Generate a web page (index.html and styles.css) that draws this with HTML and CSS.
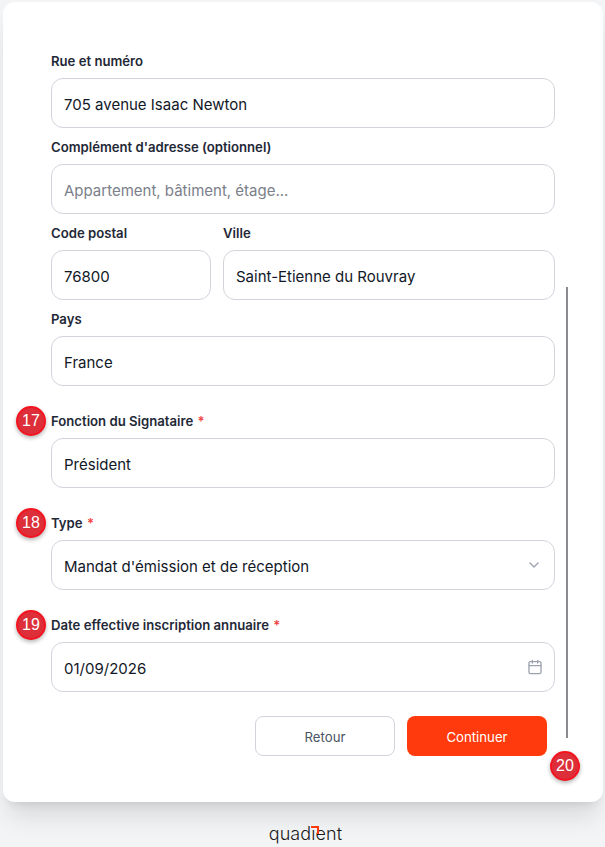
FILE: index.html
```html
<!DOCTYPE html>
<html lang="fr">
<head>
<meta charset="utf-8">
<title>Adresse</title>
<link rel="stylesheet" href="styles.css">
</head>
<body>
<main class="card">
  <form class="form">
    <div class="group">
      <div class="field">
        <label class="label">Rue et numéro</label>
        <div class="control">705 avenue Isaac Newton</div>
      </div>
      <div class="field">
        <label class="label">Complément d'adresse (optionnel)</label>
        <div class="control placeholder">Appartement, bâtiment, étage...</div>
      </div>
      <div class="row">
        <div class="field postal">
          <label class="label">Code postal</label>
          <div class="control">76800</div>
        </div>
        <div class="field city">
          <label class="label">Ville</label>
          <div class="control">Saint-Etienne du Rouvray</div>
        </div>
      </div>
      <div class="field">
        <label class="label">Pays</label>
        <div class="control">France</div>
      </div>
    </div>
    <div class="field marked">
      <span class="badge badge-label">17</span>
      <label class="label">Fonction du Signataire <span class="req">*</span></label>
      <div class="control">Président</div>
    </div>
    <div class="field marked">
      <span class="badge badge-label">18</span>
      <label class="label">Type <span class="req">*</span></label>
      <div class="control with-icon">Mandat d'émission et de réception
        <svg class="icon chevron" viewBox="0 0 24 24" fill="none" stroke="currentColor" stroke-width="2" stroke-linecap="round" stroke-linejoin="round"><path d="m6 9 6 6 6-6"/></svg>
      </div>
    </div>
    <div class="field marked">
      <span class="badge badge-label">19</span>
      <label class="label">Date effective inscription annuaire <span class="req">*</span></label>
      <div class="control with-icon">01/09/2026
        <svg class="icon calendar" viewBox="0 0 24 24" fill="none" stroke="currentColor" stroke-width="2" stroke-linecap="round" stroke-linejoin="round"><path d="M8 2v4M16 2v4"/><rect x="3" y="4" width="18" height="18" rx="2"/><path d="M3 10h18"/></svg>
      </div>
    </div>
    <div class="actions">
      <button type="button" class="btn btn-back">Retour</button>
      <button type="button" class="btn btn-next">Continuer</button>
    </div>
  </form>
  <span class="scroll-line"></span>
  <span class="badge badge-end">20</span>
</main>
<footer class="footer">
  <span class="logo">quad<span class="logo-i">ı</span>ent</span>
</footer>
</body>
</html>
```
FILE: styles.css
```css
* { box-sizing: border-box; }
html, body { margin: 0; height: 847px; overflow: hidden; }
body {
  background: #f3f4f6;
  font-family: Inter, "Noto Sans", sans-serif;
  color: #111827;
  padding: 2px 2px 0 3px;
}
.card {
  position: relative;
  width: 600px;
  height: 800px;
  background: #fff;
  border-radius: 12px;
  padding: 49px 48px 0;
  box-shadow: 0 20px 25px -5px rgba(0,0,0,.1), 0 8px 10px -6px rgba(0,0,0,.1);
}
.form { display: flex; flex-direction: column; gap: 25px; width: 504px; }
.group { display: flex; flex-direction: column; gap: 9px; }
.row { display: flex; gap: 12px; }
.postal { width: 160px; flex: none; }
.city { flex: 1; }
.field { position: relative; display: flex; flex-direction: column; gap: 7px; }
.label { font-size: 13.15px; line-height: 20px; font-weight: 600; color: #1f2937; }
.req { color: #ef4444; margin-left: 1px; }
.control {
  position: relative;
  height: 50px;
  display: flex;
  align-items: center;
  padding: 2px 12px 0;
  font-size: 15px;
  color: #111827;
  border: 1px solid #d1d5db;
  border-radius: 12px;
  background: #fff;
}
.placeholder { color: #7b808a; }
.icon { position: absolute; right: 12px; top: 50%; transform: translateY(-50%); width: 16px; height: 16px; color: #9ca3af; }
.calendar { right: 11px; }
.actions { display: flex; justify-content: flex-end; gap: 12px; padding-right: 8px; margin-top: -1px; }
.btn {
  width: 140px;
  height: 40px;
  padding: 2px 0 0;
  border-radius: 8px;
  font: 400 13.2px/20px Inter, "Noto Sans", sans-serif;
}
.btn-back { background: #fff; border: 1px solid #d1d5db; color: #4b5563; }
.btn-next { background: #ff3b0d; border: 0; color: #fff; }
.badge {
  position: absolute;
  width: 30px;
  height: 30px;
  display: flex;
  align-items: center;
  justify-content: center;
  border-radius: 50%;
  background: #dc2f3a;
  border: 2px solid #f3141f;
  box-shadow: 0 2px 4px rgba(0,0,0,.3);
  color: #fff;
  font-size: 16px;
  font-family: "Liberation Sans", sans-serif;
}
.badge-label { left: -35px; top: -5px; }
.badge-end { left: 547px; top: 749px; }
.scroll-line { position: absolute; left: 563px; top: 285px; width: 2px; height: 451px; background: #8b8b8f; }
.footer { display: flex; justify-content: center; padding-top: 21px; }
.logo { font-family: Inter, sans-serif; font-weight: 300; font-size: 18px; line-height: 22px; letter-spacing: .1px; color: #1a1a1a; margin-left: 5px; }
.logo-i { position: relative; }
.logo-i::before {
  content: "";
  position: absolute;
  left: 0;
  top: 3px;
  width: 6px;
  height: 6px;
  border-top: 2px solid #ff3b0d;
  border-right: 2px solid #ff3b0d;
}
```
